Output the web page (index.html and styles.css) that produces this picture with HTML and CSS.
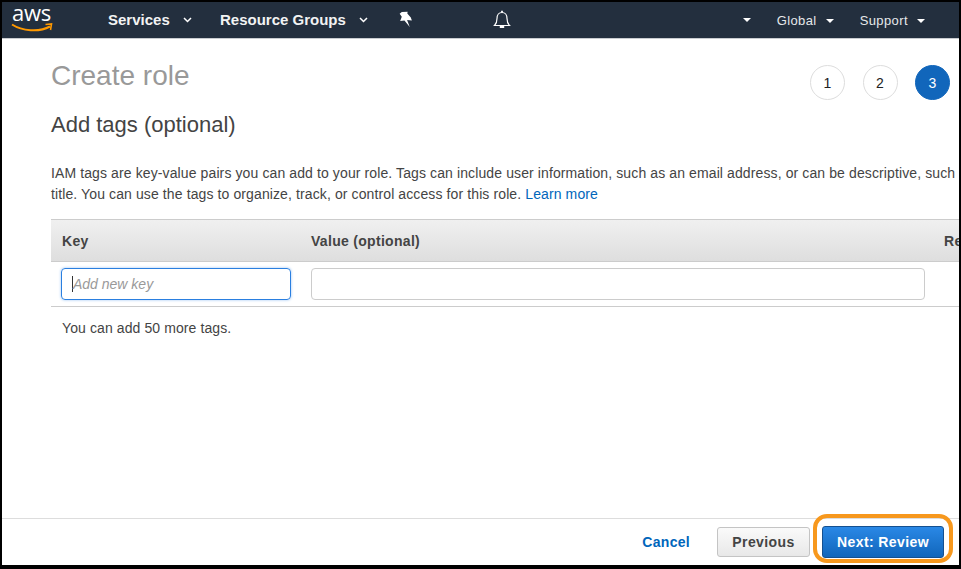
FILE: index.html
```html
<!DOCTYPE html>
<html lang="en">
<head>
  <meta charset="UTF-8">
  <title>Create role</title>
  <link rel="stylesheet" href="styles.css">
</head>
<body>
  <div class="frame">
    <nav class="topbar">
      <a class="logo">
        <span class="logo-text">aws</span>
        <svg class="logo-smile" width="42" height="10" viewBox="0 0 42 10">
          <path d="M1 1.5C11 8 28 9.5 39 3.5" fill="none" stroke="#f90" stroke-width="2"/>
          <path d="M34.5 1.5L40.5 1L39.5 7" fill="none" stroke="#f90" stroke-width="1.6"/>
        </svg>
      </a>
      <a class="nav-main nav-services">Services <svg class="chev" width="9" height="6" viewBox="0 0 9 6"><path d="M1 1l3.500 3.500L8 1" fill="none" stroke="#fff" stroke-width="1.500"/></svg></a>
      <a class="nav-main nav-groups">Resource Groups <svg class="chev" width="9" height="6" viewBox="0 0 9 6"><path d="M1 1l3.500 3.500L8 1" fill="none" stroke="#fff" stroke-width="1.500"/></svg></a>
      <svg class="pin" width="15" height="17" viewBox="0 0 14 16">
        <path d="M3.500 1L9 .8l-.3 1.500L12 6 13 9 8.500 8.500 11 15 6 9 2 9.500 3.500 5.500 1.500 2.500z" fill="#fff"/>
      </svg>
      <svg class="bell" width="18" height="19" viewBox="0 0 18 19">
        <path d="M1.500 15.500c2-2 2.500-3.500 2.500-7C4 5 6 2.500 9 2.500S14 5 14 8.500c0 3.500.5 5 2.500 7z" fill="none" stroke="#fff" stroke-width="1.200"/>
        <path d="M9 .8v1.700M6.800 17h4.400" stroke="#fff" stroke-width="1.800"/>
      </svg>
      <div class="nav-right">
        <span class="caret"></span>
        <a class="nav-small">Global<span class="caret"></span></a>
        <a class="nav-small">Support<span class="caret"></span></a>
      </div>
    </nav>

    <main class="content">
      <div class="title-row">
        <h1>Create role</h1>
        <ol class="steps">
          <li class="step">1</li>
          <li class="step">2</li>
          <li class="step step-active">3</li>
        </ol>
      </div>
      <h2>Add tags (optional)</h2>
      <p class="intro">IAM tags are key-value pairs you can add to your role. Tags can include user information, such as an email address, or can be descriptive, such<br>title. You can use the tags to organize, track, or control access for this role. <a class="link">Learn more</a></p>

      <div class="tag-table">
        <div class="tag-row tag-head">
          <span>Key</span>
          <span>Value (optional)</span>
          <span>Re</span>
        </div>
        <div class="tag-row tag-body">
          <div class="field field-focus"><span class="cursor"></span><span class="placeholder">Add new key</span></div>
          <div class="field"></div>
        </div>
      </div>
      <p class="remaining">You can add 50 more tags.</p>
    </main>

    <footer class="actions">
      <a class="cancel">Cancel</a>
      <button class="btn btn-prev">Previous</button>
      <button class="btn btn-next">Next: Review</button>
      <span class="callout"></span>
    </footer>
  </div>
</body>
</html>
```

FILE: styles.css
```css
* {
  box-sizing: border-box;
}

html, body {
  margin: 0;
  height: 100%;
  overflow: hidden;
}

body {
  background: #000;
  font-family: "Liberation Sans", Arial, sans-serif;
  color: #444;
}

.frame {
  width: 961px;
  height: 569px;
  padding: 2px 2px 4px 2px;
  display: flex;
  flex-direction: column;
  background: #000;
}

/* top bar */
.topbar {
  height: 37px;
  flex: none;
  display: flex;
  align-items: center;
  background: #232f3e;
  border-bottom: 1px solid #c9ccd0;
  color: #fff;
  white-space: nowrap;
}

.logo {
  width: 106px;
  height: 35px;
  padding: 0 0 0 9px;
  display: flex;
  flex-direction: column;
  flex: none;
}

.logo-text {
  font-family: "Open Sans", sans-serif;
  font-size: 22px;
  line-height: 18px;
  margin: 0 0 2px 1px;
  letter-spacing: -.2px;
}

.nav-main {
  font-size: 15px;
  font-weight: bold;
  display: flex;
  align-items: center;
  gap: 13px;
  margin-top: -1px;
  color: #f2f3f3;
}

.nav-services {
  width: 112px;
}

.nav-groups {
  width: 178px;
}

.pin {
  flex: none;
  margin-top: -2px;
}

.bell {
  flex: none;
  margin-left: 80px;
  margin-top: -1px;
}

.nav-right {
  margin-left: auto;
  display: flex;
  align-items: center;
  gap: 26px;
  padding-right: 34px;
  font-size: 13px;
  letter-spacing: .4px;
}

.caret {
  display: inline-block;
  width: 0;
  height: 0;
  border-left: 4px solid transparent;
  border-right: 4px solid transparent;
  border-top: 4px solid #fff;
  vertical-align: 2px;
}

.nav-small {
  color: #e6e8ea;
}

.nav-small .caret {
  margin-left: 9px;
}

/* page */
.content {
  flex: 1;
  min-height: 0;
  background: #fff;
  overflow: hidden;
  padding: 0 0 0 49px;
}

.title-row {
  display: flex;
  justify-content: space-between;
  align-items: flex-start;
  padding: 21px 9px 0 0;
  height: 72px;
}

h1 {
  margin: 0;
  font-size: 28px;
  line-height: 32px;
  font-weight: normal;
  color: #999;
}

.steps {
  display: flex;
  gap: 17.500px;
  margin: 5px 0 0;
  padding: 0;
  list-style: none;
}

.step {
  width: 35px;
  height: 35px;
  border: 1px solid #ddd;
  border-radius: 50%;
  display: flex;
  align-items: center;
  justify-content: center;
  font-size: 14px;
  color: #222;
}

.step-active {
  background: #1166bb;
  border-color: #1166bb;
  color: #fff;
}

h2 {
  margin: 0;
  font-size: 22px;
  line-height: 28px;
  font-weight: normal;
  color: #444;
}

.intro {
  margin: 24px 0 0;
  font-size: 14px;
  line-height: 21px;
  letter-spacing: .11px;
  white-space: nowrap;
}

.link {
  color: #0066bb;
}

/* tags table */
.tag-table {
  margin-top: 14px;
  width: 920px;
}

.tag-row {
  display: grid;
  grid-template-columns: 230px 614px;
  column-gap: 20px;
  padding-left: 10px;
  white-space: nowrap;
}

.tag-head {
  grid-template-columns: 229px 613px 40px;
  padding-left: 11px;
  height: 43px;
  align-items: center;
  font-size: 14px;
  font-weight: bold;
  letter-spacing: .3px;
  background: linear-gradient(#f0f0f0, #dedede);
  border-top: 1px solid #ccc;
  border-bottom: 1px solid #ccc;
  color: #444;
}

.tag-body {
  height: 45px;
  padding-top: 6px;
  border-bottom: 1px solid #ccc;
}

.field {
  height: 32px;
  border: 1px solid #ccc;
  border-radius: 4px;
  display: flex;
  align-items: center;
  padding-left: 10px;
  font-size: 14px;
}

.field-focus {
  border-color: #2a7fe0;
  box-shadow: 0 0 3px #9cc4f2;
}

.cursor {
  width: 1px;
  height: 16px;
  background: #333;
}

.placeholder {
  font-style: italic;
  color: #999;
}

.remaining {
  margin: 12px 0 0 11px;
  font-size: 14px;
  line-height: 18px;
  letter-spacing: .1px;
}

/* footer */
.actions {
  position: relative;
  flex: none;
  height: 47px;
  background: #fff;
  border-top: 1px solid #ddd;
  display: flex;
  align-items: center;
  justify-content: flex-end;
  padding: 0 15px 0 0;
}

.cancel {
  font-size: 14px;
  font-weight: bold;
  color: #0066bb;
  margin-right: 27px;
  letter-spacing: .3px;
}

.btn {
  font-family: inherit;
  font-size: 14px;
  font-weight: bold;
  letter-spacing: .4px;
  border-radius: 3px;
  padding: 0;
}

.btn-prev {
  width: 93px;
  height: 30px;
  background: linear-gradient(#fafafa, #e8e8e8);
  border: 1px solid #c4c4c4;
  color: #444;
  margin-right: 12px;
}

.btn-next {
  width: 122px;
  height: 32px;
  background: linear-gradient(#2a88e6, #1166bb);
  border: 1px solid #15508f;
  color: #fff;
}

.callout {
  position: absolute;
  left: 811px;
  top: -5px;
  width: 140px;
  height: 49px;
  border: 4px solid #f7981d;
  border-radius: 14px;
}
```
